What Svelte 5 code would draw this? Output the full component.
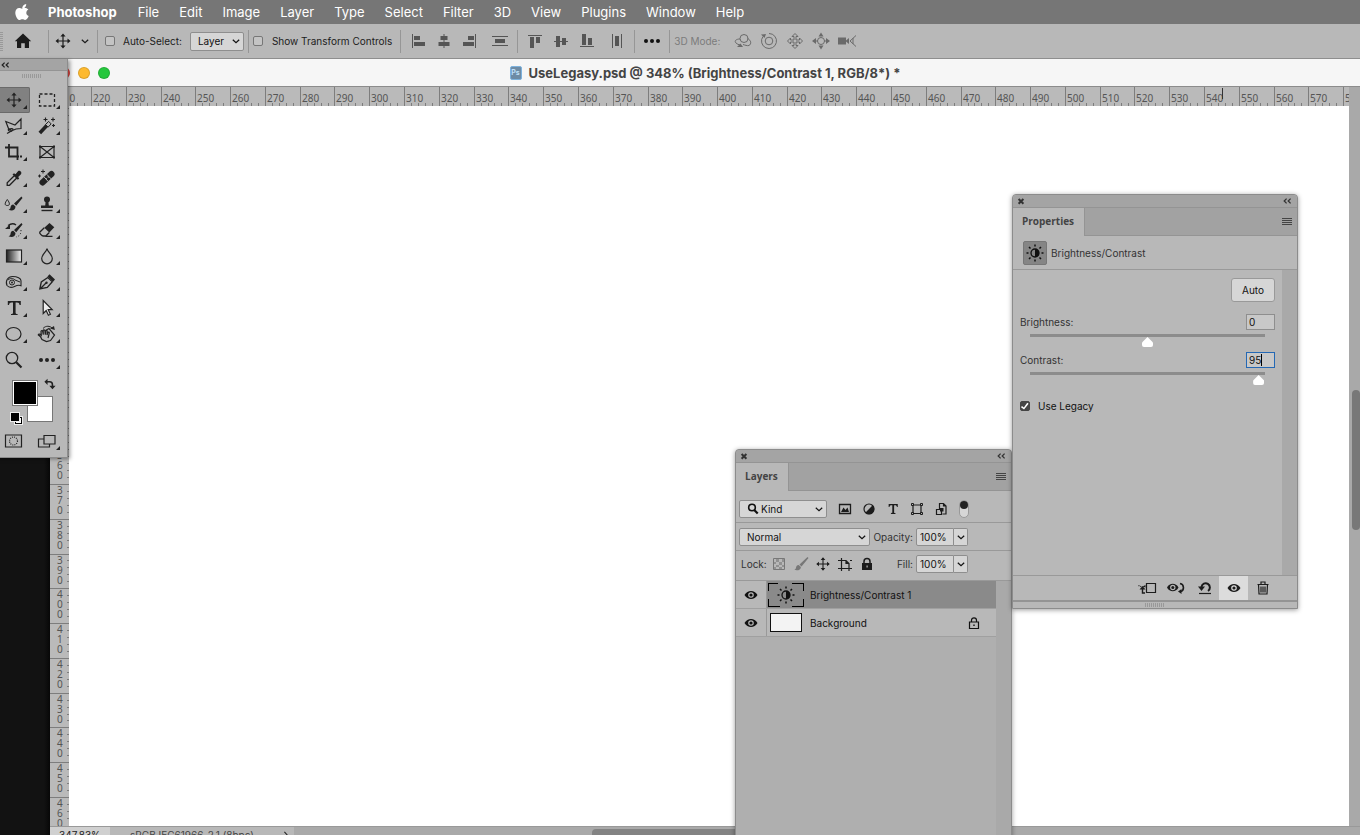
<script>
  const menus = ['File', 'Edit', 'Image', 'Layer', 'Type', 'Select', 'Filter', '3D', 'View', 'Plugins', 'Window', 'Help'];

  const line = 'fill="none" stroke="currentColor"';
  const icons = {
    apple: '<path fill="currentColor" d="M13.1 5.2c.8-1 1.2-2.2 1.1-3.3-1.1.1-2.2.7-2.9 1.6-.7.8-1.200 2-1 3 1 .1 2.100-.5 2.800-1.300zM14.300 10.900c0-1.700 1-2.700 2.100-3.300-.8-1.100-2-1.600-3.300-1.600-1.300 0-2.100.7-3 .7s-1.900-.7-3-.7C5.200 6 3.300 7.700 3.300 10.700c0 3.500 2.400 7.300 4.400 7.300 1 0 1.500-.7 2.700-.7s1.600.7 2.700.7c1.700 0 3.100-2.500 3.600-4-1.500-.6-2.400-1.700-2.400-3.100z"/>',
    home: '<path fill="currentColor" d="M10 2.500 1.800 10.300H4V17h4.200v-4.700h3.600V17H16v-6.700h2.200z"/>',
    move: `<path ${line} stroke-width="1.200" d="M10 4v12M4 10h12"/><path fill="currentColor" d="m10 2.500 2.600 3H7.400zm0 15-2.600-3h5.200zM2.500 10l3-2.600v5.200zm15 0-3 2.600V7.400z"/>`,
    marquee: `<path ${line} stroke-width="1.300" stroke-dasharray="3 2" d="M2.500 4h15v12h-15z"/>`,
    lasso: `<path ${line} stroke-width="1.200" d="m4.500 12.500-2.700-7L11 9l6-6v9.500l-5 .500-6 2.500M4 14.500c2-2.500 5-2.200 5-.8s-3.500 2-4.500.6 2-3 3 1.500M6.500 15.500 3 17.500"/>`,
    wand: `<path ${line} stroke-width="3.600" d="m2.800 17 7-7.500"/><path ${line} stroke-width="1" d="m8.500 8.500 2.600 2.700 3-3.300-2.400-2.500z"/><path ${line} stroke-width="1.100" d="M8.500 1.500v4M6.500 3.500h4M16 1.500v4M14 3.500h4M16.500 8v3M15 9.500h3"/>`,
    crop: `<path ${line} stroke-width="1.800" d="M1 5.500h12.500v8M5 2v12.500h10M16 14.500h2"/><path ${line} stroke-width="1.800" d="M13.500 15v3"/>`,
    frame: `<path ${line} stroke-width="1.200" d="M3 4.500h14v11H3zM3 4.500l14 11M17 4.500l-14 11"/><path fill="currentColor" d="M2 3.500h2v2H2zM16 3.500h2v2h-2zM2 14.500h2v2H2zM16 14.500h2v2h-2z"/>`,
    dropper: `<path ${line} stroke-width="1.300" d="m10.500 7.500-7.300 7.300v2.500h2.300l7.500-7.500z"/><path fill="currentColor" d="m8.500 6.500 1.500-1.300 1.500 1 2.500-3c1.500-1.400 4.500 1 3 3l-2.800 2.700 1 1.500-1.400 1.400z"/>`,
    heal: `<path ${line} stroke-width="6" stroke-linecap="round" d="m5.500 14.500 9-8.500"/><path fill="none" stroke="#b8b8b8" stroke-width="1" d="m7 8.800 4.200 4.700M9.800 6.300l4.200 4.500"/><g fill="#b8b8b8"><circle cx="9.200" cy="10.600" r=".7"/><circle cx="11.200" cy="9" r=".7"/></g><path ${line} stroke-width="1" d="M6 1.500v4M4 3.500h4M2.500 6.500v3M1 8h3"/>`,
    brush: `<path fill="currentColor" d="M17.500 2.500 10 9.500l2.200 2.200L18.500 4zM9.300 10.400c-2 .1-2.600 1.500-2.800 3.100-.2 1.500-1 2-2 2.300 3.300 1.700 7 .6 7-3.200z"/><path ${line} stroke-width="1" d="M3.300 5.500c2.600 3.500 3 6 0 6s-2.600-2.500 0-6z"/>`,
    stamp: `<circle cx="10" cy="5.500" r="3" fill="currentColor"/><path fill="currentColor" d="M8.700 7h2.600l.5 4.500H16V14H4v-2.500h4.200z"/><path ${line} stroke-width="1.400" d="M4.500 16.500h11"/>`,
    history: `<path fill="currentColor" d="M17.500 3 10 10l2.200 2.200L18.500 4.500zM9.300 10.800c-2 .1-2.600 1.500-2.800 3.100-.2 1.500-1 2-2 2.300 3.300 1.700 7 .6 7-3.200zM1 9l5-4.500V9z"/><path ${line} stroke-width="1.400" d="M4 5.500c3-2 6-2 8-.5"/><path ${line} stroke-width="1" stroke-dasharray="1 2" d="M17 10c0 4-1 6-5 7"/>`,
    eraser: `<path fill="currentColor" d="m12.500 3 4.800 4.300-5 5.200-5-4.700z"/><path ${line} stroke-width="1.300" d="m7.300 7.800-4.600 4.500c-.5.600 2 3.700 3.500 3.700h2.600l3.500-3.500M8.500 16.300h7"/>`,
    gradient: '<defs><linearGradient id="gradTool"><stop offset="0" stop-color="#222"/><stop offset="1" stop-color="#f4f4f4"/></linearGradient></defs><rect x="2.500" y="4" width="15" height="12" fill="url(#gradTool)" stroke="#222" stroke-width="1.200"/>',
    drop: `<path ${line} stroke-width="1.200" d="M10 2.500c.5 3.500 5.300 6 5.300 10a5 5 0 0 1-10.600 0c0-4 4.800-6.500 5.300-10z"/>`,
    sponge: `<path ${line} stroke-width="1.100" d="M3 13.500C1 9 4 4.500 8.500 4.500c5 0 8.500 2 8.500 4.200v5c-2.500-1.200-4.500-.2-6.500.8-2.500 1.200-5.500 1.300-7.500-1z"/><circle cx="8" cy="10.500" r="2.500" ${line}/><circle cx="8" cy="10.500" r="1" fill="currentColor"/><path ${line} d="M4 8c2-2 5-2 7 0l5 2"/>`,
    pen: `<path ${line} stroke-width="1.300" d="m2.800 17 1.500-7 6.500-4.500 4.500 4.200-5 5.800zM3 17l6-6"/><circle cx="9.500" cy="10.800" r="1.200" fill="currentColor"/><path fill="currentColor" d="m10.500 4.500 2-2.200 5.500 5.200-2 2.200z"/>`,
    type: '<path fill="currentColor" d="M3.800 3h13v4h-1.200c-.2-1.700-.9-2.500-2.700-2.500h-1.300v10.300c0 1 .5 1.200 2 1.300v1H7v-1c1.500-.1 2-.3 2-1.300V4.500H7.700C5.900 4.500 5.200 5.300 5 7H3.800z"/>',
    arrow: '<path fill="#eee" stroke="currentColor" stroke-width="1.200" d="M6.200 2.500v13l3-3 2.200 4.800 2-1-2.200-4.600h4z"/>',
    ellipse: `<ellipse cx="9.500" cy="10" rx="7.500" ry="6.500" ${line} stroke-width="1.200"/>`,
    hand: `<path ${line} stroke-width="1.200" d="m2.500 11 2.500 4.500 4.500 2 4-1 4-5.500-5.500-6.500-3.500 2M4.500 13.500 1.300 11c0-1.300 1.700-1.200 3 0L4 7.500c0-1.200 1.500-1 1.700 0l.6 3.200-.1-4c0-1.200 1.600-1 1.700 0l.4 4 .3-3.600c.2-1.100 1.500-1 1.600 0l-.2 4 .9-2.500c.5-.9 1.600-.5 1.400.5L11 14"/><path ${line} d="M6 4.500c3-3.300 7-2.500 9-.5"/><path fill="currentColor" d="m13 4.500 4-2.500.8 4z"/>`,
    zoom: `<circle cx="8" cy="8" r="5.700" ${line} stroke-width="1.300"/><path ${line} stroke-width="2.200" d="m12.200 12.200 5.300 5.300"/>`,
    dots: '<g fill="currentColor"><circle cx="4" cy="10" r="2"/><circle cx="10" cy="10" r="2"/><circle cx="16" cy="10" r="2"/></g>',
    swap: `<path ${line} stroke-width="2.200" d="M5 5.500h4.500c2.500 0 4 1.500 4 4v2"/><path fill="currentColor" d="M6.500 1v9L2 5.500zM9 11h9l-4.500 5z"/>`,
    mask: `<path ${line} stroke-width="1.200" d="M1.500 4h16v12h-16z"/><circle cx="9.500" cy="10" r="4" ${line} stroke-width="1.200" stroke-dasharray="1 1.100"/>`,
    screen: `<path ${line} stroke-width="1.200" d="M7 8H1.500v8h11v-3M7 4.500h11V13H7z"/>`,
    chevron: `<path ${line} stroke-width="1.200" d="m6.800 8.800 3.200 3 3.200-3"/>`,
    collapse: `<path ${line} stroke-width="1.600" d="M9.500 7 6.500 10l3 3M14.500 7l-3 3 3 3"/>`,
    close: `<path ${line} stroke-width="2.500" d="m7 7.500 6 6M13 7.500l-6 6"/>`,
    menu: `<path ${line} stroke-width="1" d="M5 6.500h10M5 8.500h10M5 10.500h10M5 12.500h10"/>`,
    alignL: '<path fill="currentColor" d="M4 3h1v14H4zM6 5h6v4H6zM6 11h11v4H6z"/>',
    alignC: '<path fill="currentColor" d="M9.500 3h1v14h-1zM6.500 5h7v4h-7zM4.500 11h11v4h-11z"/>',
    alignR: '<path fill="currentColor" d="M15 3h1v14h-1zM8 5h6v4H8zM3 11h11v4H3z"/>',
    distV: '<path fill="currentColor" d="M2 5h16v1H2zM5 8h10v4H5zM2 14h16v1H2z"/>',
    alignT: '<path fill="currentColor" d="M3 4h14v1H3zM5 6h4v11H5zM11 6h4v6h-4z"/>',
    alignM: '<path fill="currentColor" d="M3 10h14v1H3zM5 5h4v11H5zM11 7h4v7h-4z"/>',
    alignB: '<path fill="currentColor" d="M3 15h14v1H3zM5 3h4v11H5zM11 7h4v7h-4z"/>',
    distH: '<path fill="currentColor" d="M5 3h1v14H5zM8 5h4v10H8zM14 3h1v14h-1z"/>',
    orbit: `<circle cx="11" cy="7.500" r="4" ${line}/><path ${line} d="M7 8c-4 0-6 2-4 4 1 1 2.500 1.700 4 2M14.500 7.500c4 2 4 5.500 1.500 7-2 .5-4-.5-6-1"/><path fill="currentColor" d="m4 16 3.500-3.500L10 16z"/>`,
    roll: `<circle cx="10" cy="10" r="3.800" ${line}/><path ${line} d="M4 5.500a7.500 7.500 0 1 0 6-3"/><path fill="currentColor" d="M2 3.500 7 3 5.500 7z"/>`,
    pan3d: `<path ${line} d="m10 2.500 3 3h-2V9h3.500V7l3 3-3 3v-2H11v3.500h2l-3 3-3-3h2V11H5.500v2l-3-3 3-3v2H9V5.500H7z"/>`,
    slide: `<circle cx="10" cy="10" r="3.500" ${line}/><path fill="currentColor" d="m10 1.500 2.500 4h-5zM10 18.500l-2.500-4h5zM1 10l4-3v6zM19 10l-4-3v6z"/><path ${line} d="M4 10h3M13 10h3"/>`,
    camera: `<path fill="currentColor" d="M1 6.500h8v7H1zM9 9.500l3-2.500v6l-3-2.500z"/><path ${line} d="m19 4.500-6 5.500 6 5.500M16 7v6"/>`,
    image: `<path ${line} stroke-width="1.300" d="M4.500 5.500h11v9h-11z"/><path fill="currentColor" d="m6 13 2.500-4.500 2 2.500 2-2.500L14 13z"/>`,
    adjust: `<circle cx="10" cy="10" r="5" ${line} stroke-width="1.200"/><path fill="currentColor" d="M13.700 6.300a5.200 5.200 0 0 1-7.400 7.400z"/>`,
    shape: `<path ${line} stroke-width="1.200" d="M6 6h8v8.500H6z"/><g fill="#b8b8b8" stroke="currentColor"><path d="M4.500 4.500h2v2h-2zM13.500 4.500h2v2h-2zM4.500 13.500h2v2h-2zM13.500 13.500h2v2h-2z"/></g>`,
    smart: `<path ${line} stroke-width="1.200" d="M8.500 10V4.500h4l2.500 2.500v8h-3.500M12.500 4.500V7H15M5.500 10.500h5v5h-5z"/><path fill="currentColor" d="M9 9h3.500v3.500H9z"/>`,
    checker: `<path ${line} d="M4.500 4.500h11v11h-11z"/><path fill="currentColor" opacity=".6" d="M7 5h3v3H7zM13 5h2v3h-2zM5 8h2v2H5zM10 8h3v3h-3zM7 11h3v2H7zM13 11h2v2h-2zM5 13h2v2H5zM10 13h3v2h-3z"/>`,
    paint: '<path fill="currentColor" d="M16.500 3 8.500 10.500l2 2 7-8.500zM7.700 11c-2 0-2.500 1.500-2.700 2.800-.1 1-.9 1.700-1.700 2 3 1.200 6.600.2 6.600-2.900z"/>',
    artboard: `<path ${line} stroke-width="1.200" d="M6.500 4v13M3 6.500h8l3 3v7.500M3 14.500h14M11 6.500v3h3"/><path ${line} stroke-width="1.200" d="M15 6.500h2"/>`,
    lock: '<path fill="currentColor" d="M5 9h10v7H5z"/><path fill="none" stroke="currentColor" stroke-width="1.500" d="M7 9V7.500a3 3 0 0 1 6 0V9"/><path fill="#b8b8b8" d="M9.500 11.500h1.200v2H9.500z"/>',
    lockLine: `<path ${line} stroke-width="1.200" d="M5.500 9h9v6.500h-9zM7.500 9V7.300a2.500 2.500 0 0 1 5 0V9"/><path fill="currentColor" d="M9.300 11.500h1.400V13H9.300z"/>`,
    eye: '<path fill="currentColor" fill-rule="evenodd" d="M3.500 10C6.500 4.600 13.500 4.600 16.500 10c-3 5.400-10 5.400-13 0zm6.500-2.800a2.800 2.800 0 1 0 0 5.600 2.800 2.800 0 0 0 0-5.600z"/><circle cx="10" cy="10" r="1.600" fill="currentColor"/>',
    sun: `<circle cx="10" cy="10" r="4" ${line} stroke-width="1.300"/><path fill="currentColor" d="M10 6a4 4 0 0 1 0 8z"/><path ${line} stroke-width="1.500" d="M10 1.500v2M10 16.500v2M1.500 10h2M16.500 10h2M4 4l1.500 1.500M14.500 14.500 16 16M4 16l1.500-1.500M14.500 5.500 16 4"/>`,
    search: `<circle cx="9" cy="8.500" r="3.300" ${line} stroke-width="1.600"/><path ${line} stroke-width="2.200" d="m11.200 11 3.500 3.500"/>`,
    clip: `<path ${line} stroke-width="1.200" d="M9.500 5.500h9v9h-9z"/><path ${line} stroke-width="1.200" stroke-dasharray="1 1" d="M1.500 7.500 5 9"/><path ${line} stroke-width="1.400" d="M8 15H5.500v-4"/><path fill="currentColor" d="m2.500 11.500 3-3.500 3 3.500zM5.500 8.500 8.500 7v2.500z"/>`,
    prev: `<path fill="currentColor" fill-rule="evenodd" d="M1 9.500C3.500 4.500 10 4.500 12.500 9.500 10 14.500 3.500 14.500 1 9.500zm5.800-2.700a2.700 2.700 0 1 0 0 5.400 2.700 2.700 0 0 0 0-5.400z"/><circle cx="6.800" cy="9.500" r="1.500" fill="currentColor"/><path ${line} stroke-width="1.600" d="M14 5.500c4.500 1 4.500 7 .5 8"/><path fill="currentColor" d="M12 13.500 15.500 11v5z"/>`,
    reset: `<path ${line} stroke-width="2" d="M6.500 9a4.200 4.200 0 1 1 6.500 4"/><path fill="currentColor" d="M3 8.500h7L6.500 13z"/><path ${line} stroke-width="1.200" d="M4 15.500h12"/>`,
    trash: `<path ${line} stroke-width="1.200" d="M4.500 6.500h11M5.500 6.500l.5 9.500h8l.5-9.500M8 6V4h4v2M8 8.500v6M10 8.500v6M12 8.500v6"/>`,
    next: `<path ${line} stroke-width="1.300" d="m8 6 3.500 4L8 14"/>`
  };

  const tools = [
    ['move', 'Move'], ['marquee', 'Marquee'], ['lasso', 'Lasso'], ['wand', 'Magic wand'],
    ['crop', 'Crop'], ['frame', 'Frame'], ['dropper', 'Eyedropper'], ['heal', 'Healing brush'],
    ['brush', 'Brush'], ['stamp', 'Clone stamp'], ['history', 'History brush'], ['eraser', 'Eraser'],
    ['gradient', 'Gradient'], ['drop', 'Blur'], ['sponge', 'Sponge'], ['pen', 'Pen'],
    ['type', 'Type'], ['arrow', 'Path selection'], ['ellipse', 'Ellipse'], ['hand', 'Rotate view'],
    ['zoom', 'Zoom'], ['dots', 'More tools']
  ];
  const single = ['frame', 'zoom'];

  let winWidth = $state(1360);
  let winHeight = $state(835);

  // Ruler geometry: screen pixels per document unit at the current zoom
  const scale = 3.4783;
  const range = (from, to, step) => Array.from({ length: Math.max(0, Math.floor((to - from) / step) + 1) }, (_, i) => from + i * step);
  const hx = (v) => Math.round((v - 220) * scale + 41);
  const vy = (v) => Math.round((v - 460) * scale + 691);
  const hEnd = $derived(220 + (winWidth - 102) / scale);
  const vEnd = $derived(460 + (winHeight - 809) / scale);
  const hMajor = $derived(range(210, hEnd, 10));
  const hMinor = $derived(range(212, hEnd, 2).filter((v) => v % 10));
  const vMajor = $derived(range(360, vEnd, 10));
  const vMinor = $derived(range(262, vEnd, 2).filter((v) => v % 10));

  let autoSelect = $state(false);
  let showTransform = $state(false);
  let legacy = $state(true);
  let brightness = $state(0);
  let contrast = $state(95);
  let activeTool = $state('move');
</script>

<svelte:window bind:innerWidth={winWidth} bind:innerHeight={winHeight} />

{#snippet icon(name, size = 20)}
  <svg class="icon" width={size} height={size} viewBox="0 0 20 20" aria-hidden="true">{@html icons[name]}</svg>
{/snippet}

<div class="desktop">
  <nav class="menubar">
    <button class="apple" aria-label="Apple menu">{@render icon('apple')}</button>
    <button class="app-name">Photoshop</button>
    {#each menus as m}<button>{m}</button>{/each}
  </nav>

  <div class="options">
    <span class="grip-v"></span>
    <button class="home" aria-label="Home">{@render icon('home')}</button>
    <span class="sep"></span>
    <button class="current" aria-label="Move tool">{@render icon('move')}{@render icon('chevron')}</button>
    <span class="sep"></span>
    <label class="check"><input type="checkbox" bind:checked={autoSelect} />Auto-Select:</label>
    <span class="select layer-select">
      <select aria-label="Auto-select target"><option>Layer</option><option>Group</option></select>
      {@render icon('chevron')}
    </span>
    <span class="sep near"></span>
    <label class="check second"><input type="checkbox" bind:checked={showTransform} />Show Transform Controls</label>
    <span class="sep"></span>
    <div class="group aligns">
      {#each ['alignL', 'alignC', 'alignR'] as n}<button aria-label={n}>{@render icon(n)}</button>{/each}
      <button class="dist" aria-label="Distribute vertically">{@render icon('distV')}</button>
    </div>
    <span class="sep"></span>
    <div class="group aligns">
      {#each ['alignT', 'alignM', 'alignB'] as n}<button aria-label={n}>{@render icon(n)}</button>{/each}
      <button class="dist" aria-label="Distribute horizontally">{@render icon('distH')}</button>
    </div>
    <span class="sep"></span>
    <button class="more" aria-label="More options">{@render icon('dots')}</button>
    <span class="sep"></span>
    <span class="mode-label">3D Mode:</span>
    <div class="group modes">
      {#each ['orbit', 'roll', 'pan3d', 'slide', 'camera'] as n}<button disabled aria-label={n}>{@render icon(n)}</button>{/each}
    </div>
  </div>

  <main class="workspace">
    <section class="document">
      <header class="titlebar">
        <div class="lights">
          <button class="red" aria-label="Close"></button>
          <button class="yellow" aria-label="Minimize"></button>
          <button class="green" aria-label="Zoom window"></button>
        </div>
        <h1><span class="file-icon">Ps</span>UseLegasy.psd @ 348% (Brightness/Contrast 1, RGB/8*) *</h1>
      </header>
      <div class="view">
        <svg class="ruler ruler-h" aria-hidden="true">
          {#each hMajor as v}
            <rect x={hx(v)} y="0" width="1" height="19" fill="#7d7d7d" />
            <text x={hx(v) + 2} y="15">{v}</text>
          {/each}
          {#each hMinor as v}<rect x={hx(v)} y="16" width="1" height="3" fill="#7d7d7d" />{/each}
          <rect x="1172" y="1" width="1" height="11" fill="#333" />
        </svg>
        <div class="scroll-v"><span></span></div>
        <svg class="ruler ruler-v" aria-hidden="true">
          {#each vMajor as v}
            <rect x="0" y={vy(v)} width="19" height="1" fill="#7d7d7d" />
            {#each String(v).split('') as d, i}
              <text x="7" y={vy(v) + 10 + i * 10}>{d}</text>
            {/each}
          {/each}
          {#each vMinor as v}<rect x="17" y={vy(v)} width="2" height="1" fill="#7d7d7d" />{/each}
        </svg>
        <div class="canvas"></div>
      </div>
      <footer class="status">
        <span class="percent">347.83%</span>
        <span class="profile">sRGB IEC61966-2.1 (8bpc)</span>
        <button aria-label="Status menu">{@render icon('next', 16)}</button>
        <div class="scroll-h"><span></span></div>
      </footer>
    </section>

    <aside class="toolbox">
      <div class="toolbox-head">{@render icon('collapse', 16)}</div>
      <div class="grip"></div>
      <div class="tools">
        {#each tools as [name, label]}
          <button class:active={activeTool === name} class:flyout={!single.includes(name)} aria-label={label} onclick={() => (activeTool = name)}>
            {@render icon(name)}
          </button>
        {/each}
      </div>
      <div class="colors">
        <button class="bg" aria-label="Background color"></button>
        <button class="fg" aria-label="Foreground color"></button>
        <button class="swap" aria-label="Swap colors">{@render icon('swap', 14)}</button>
        <button class="default" aria-label="Default colors"><i></i><b></b></button>
      </div>
      <div class="tools">
        <button aria-label="Quick mask">{@render icon('mask')}</button>
        <button class="flyout" aria-label="Screen mode">{@render icon('screen')}</button>
      </div>
    </aside>

    <section class="panel layers">
      <div class="panel-head"><button aria-label="Close">{@render icon('close', 16)}</button><button aria-label="Collapse">{@render icon('collapse', 16)}</button></div>
      <div class="tabs"><button class="tab">Layers</button><button class="panel-menu" aria-label="Panel menu">{@render icon('menu')}</button></div>
      <div class="row filter">
        <span class="select kind">
          {@render icon('search')}
          <select aria-label="Filter type"><option>Kind</option><option>Name</option></select>
          {@render icon('chevron')}
        </span>
        <div class="filter-icons">
          {#each ['image', 'adjust', 'type', 'shape', 'smart'] as n}<button aria-label={n}>{@render icon(n, n === 'type' ? 14 : 20)}</button>{/each}
        </div>
        <button class="toggle" aria-label="Toggle filter"><span></span></button>
      </div>
      <div class="row blend">
        <span class="select mode">
          <select aria-label="Blend mode"><option>Normal</option><option>Multiply</option></select>
          {@render icon('chevron')}
        </span>
        <label class="value">Opacity:<input type="text" value="100%" /></label>
        <button class="drop" aria-label="Opacity slider">{@render icon('chevron')}</button>
      </div>
      <div class="row locks">
        <span>Lock:</span>
        <div class="lock-icons">
          {#each ['checker', 'paint', 'move', 'artboard', 'lock'] as n, i}<button class:dim={i < 2} aria-label={n}>{@render icon(n, n === 'move' ? 18 : 20)}</button>{/each}
        </div>
        <label class="value">Fill:<input type="text" value="100%" /></label>
        <button class="drop" aria-label="Fill slider">{@render icon('chevron')}</button>
      </div>
      <div class="list">
        <div class="layer selected">
          <button class="vis" aria-label="Toggle visibility">{@render icon('eye')}</button>
          <div class="name"><span class="thumb adj">{@render icon('sun')}</span>Brightness/Contrast 1</div>
        </div>
        <div class="layer">
          <button class="vis" aria-label="Toggle visibility">{@render icon('eye')}</button>
          <div class="name"><span class="thumb plain"></span>Background<span class="locked">{@render icon('lockLine')}</span></div>
        </div>
      </div>
    </section>

    <section class="panel properties">
      <div class="panel-head"><button aria-label="Close">{@render icon('close', 16)}</button><button aria-label="Collapse">{@render icon('collapse', 16)}</button></div>
      <div class="tabs"><button class="tab">Properties</button><button class="panel-menu" aria-label="Panel menu">{@render icon('menu')}</button></div>
      <div class="kind-row"><span class="badge">{@render icon('sun')}</span>Brightness/Contrast</div>
      <div class="props-body">
        <div class="controls">
          <button class="auto">Auto</button>
          <div class="field">
            <label for="brightness">Brightness:</label>
            <span class="num"><input id="brightness" type="text" bind:value={brightness} /></span>
          </div>
          <input type="range" aria-label="Brightness" min="-100" max="100" bind:value={brightness} />
          <div class="field">
            <label for="contrast">Contrast:</label>
            <span class="num editing"><input id="contrast" type="text" bind:value={contrast} /></span>
          </div>
          <input type="range" aria-label="Contrast" min="-100" max="100" bind:value={contrast} />
          <label class="check legacy"><input type="checkbox" bind:checked={legacy} />Use Legacy</label>
        </div>
      </div>
      <div class="actions">
        {#each ['clip', 'prev', 'reset', 'eye', 'trash'] as n}<button class:on={n === 'eye'} aria-label={n}>{@render icon(n)}</button>{/each}
      </div>
      <div class="resize"><div class="grip"></div></div>
    </section>
  </main>
</div>

<style>
  :global(body) { background: #111; }
  .desktop, .desktop * { box-sizing: border-box; }
  .desktop {
    height: 100vh; display: flex; flex-direction: column; overflow: hidden;
    font: 10px/14px Inter, "Liberation Sans", sans-serif; color: #222;
  }
  button { border: 0; padding: 0; margin: 0; background: none; font: inherit; color: inherit; display: inline-flex; align-items: center; justify-content: center; }
  input { font: inherit; color: inherit; margin: 0; }
  .icon { display: block; flex: none; }

  .menubar { flex: none; height: 24px; display: flex; align-items: center; gap: 20px; padding-left: 12px; background: #767676; color: #fff; font-size: 13px; font-weight: 400; text-shadow: 0 1px 2px #5558; white-space: nowrap; }
  .menubar .apple { width: 20px; margin-right: -4px; }
  .menubar .app-name { font-weight: 700; margin-right: 1px; }

  .options { flex: none; height: 35px; display: flex; align-items: center; background: #b8b8b8; border-bottom: 1px solid #8e8e8e; white-space: nowrap; color: #1c1c1c; }
  .sep { flex: none; width: 1px; height: 23px; background: #969696; }
  .sep.near { margin-left: 4px; }
  .grip-v { width: 3px; height: 19px; background: repeating-linear-gradient(#999 0 1px, #b8b8b8 1px 2px); }
  .home { margin: 0 15px 0 10px; }
  .current { gap: 2px; padding: 0 2px 0 4px; }
  .check { display: flex; align-items: center; gap: 8px; padding: 0 8px 0 7px; }
  .check.second { padding: 0 8px 0 4px; gap: 9px; }
  input[type='checkbox'] { appearance: none; width: 10px; height: 10px; border: 1px solid #777; border-radius: 2px; background: #c4c4c4; display: grid; place-items: center; }
  input[type='checkbox']:checked { background: #444; border-color: #444; }
  input[type='checkbox']:checked::before { content: ''; width: 8px; height: 8px; background: #fff; clip-path: polygon(12% 50%, 0 65%, 38% 95%, 95% 22%, 78% 8%, 36% 68%); }
  .select { display: flex; align-items: center; position: relative; border: 1px solid #8e8e8e; border-radius: 2px; background: #d6d6d6; color: #111; }
  .select select { appearance: none; width: 100%; height: 100%; border: 0; background: none; font: inherit; color: inherit; padding: 0 18px 0 7px; }
  .select > :global(svg:last-child) { position: absolute; right: -3px; pointer-events: none; }
  .layer-select { width: 54px; height: 19px; }
  .group { display: flex; align-items: center; color: #555; }
  .aligns { gap: 6px; padding: 0 7px; }
  .aligns .dist { margin-left: 4px; }
  .more { padding: 0 7px; color: #111; }
  .mode-label { color: #7c7c7c; padding: 0 13px 0 4px; }
  .modes { gap: 6px; color: #6a6a6a; }

  .workspace { flex: 1; position: relative; min-height: 0; background: linear-gradient(90deg, #121212 44px, #070707 50px); }
  .document { position: absolute; inset: 0 0 -8px 50px; display: flex; flex-direction: column; }
  .titlebar { flex: none; height: 28px; display: grid; grid-template-columns: 1fr auto 1fr; align-items: center; background: #f6f6f6; border-bottom: 1px solid #8c8c8c; }
  .lights { display: flex; gap: 8px; padding-left: 8px; }
  .lights button { width: 12px; height: 12px; border-radius: 50%; border: 1px solid #0002; }
  .red { background: #fe4e48; } .yellow { background: #fdb92e; } .green { background: #25c73d; }
  h1 { margin: 0; font-size: 13px; font-weight: 700; color: #444; display: flex; align-items: center; gap: 7px; white-space: nowrap; }
  .file-icon { width: 12px; height: 14px; border-radius: 2px; background: #6d8ba5; border: 1px solid #7db2dd; color: #bfe0fa; font-size: 7px; line-height: 12px; text-align: center; }
  .view { flex: 1; min-height: 0; display: grid; grid-template: 19px minmax(0, 1fr) / 19px minmax(0, 1fr) 11px; }
  .ruler { display: block; background: #bababa; overflow: hidden; font: 10px "Noto Sans", sans-serif; }
  .ruler text { fill: #555; }
  .ruler-h { grid-column: 1 / 3; width: 100%; height: 100%; }
  .ruler-v { width: 100%; height: 100%; }
  .canvas { background: #fff; }
  .scroll-v { grid-area: 1 / 3 / 3 / 4; background: #a9a9a9; padding-left: 3px; display: grid; grid-template-rows: 41% 19% 1fr; }
  .scroll-v span { grid-row: 2; background: #787878; border-radius: 4px; }
  .status { flex: none; height: 17px; display: flex; align-items: center; background: #b8b8b8; border-top: 1px solid #999; white-space: nowrap; }
  .percent { align-self: stretch; display: flex; align-items: center; padding: 0 9px; min-width: 60px; background: #d0d0d0; }
  .profile { padding: 0 24px 0 20px; color: #444; }
  .scroll-h { flex: 1; align-self: stretch; background: #a9a9a9; padding-top: 2px; display: grid; grid-template-columns: 28% 28% 1fr; }
  .scroll-h span { grid-column: 2; background: #838383; border-radius: 4px; }

  .toolbox { position: absolute; left: -3px; top: 0; width: 71px; background: #b8b8b8; border-right: 1px solid #8c8c8c; border-bottom: 1px solid #8c8c8c; box-shadow: 2px 1px 4px #0006; padding-bottom: 3px; }
  .toolbox-head { height: 12px; display: flex; align-items: center; background: #a4a4a4; border-bottom: 1px solid #949494; }
  .grip { width: 20px; height: 4px; margin: 3px auto 0; background: repeating-linear-gradient(90deg, #999 0 1px, #b8b8b8 1px 2px); }
  .toolbox > .grip { margin: 3px 0 9px 25px; }
  .tools { display: grid; grid-template-columns: 33px 33px; grid-auto-rows: 26px; }
  .tools button { position: relative; border-radius: 2px; }
  .tools .active { background: #818181; box-shadow: inset 0 0 0 1px #6a6a6a; }
  .flyout::after { content: ''; position: absolute; right: 3px; bottom: 4px; width: 4px; height: 4px; background: #222; clip-path: polygon(100% 0, 100% 100%, 0 100%); }
  .colors { position: relative; height: 55px; }
  .colors button { position: absolute; }
  .fg { left: 15px; top: 7px; width: 26px; height: 26px; background: #000; border: 1px solid #777; box-shadow: inset 0 0 0 1px #fff; }
  .bg { left: 30px; top: 23px; width: 26px; height: 26px; background: #fff; border: 1px solid #777; }
  .swap { left: 46px; top: 5px; }
  .default { left: 14px; top: 40px; width: 11px; height: 11px; }
  .default i { position: absolute; right: 0; bottom: 0; width: 7px; height: 7px; background: #fff; border: 1px solid #000; outline: 1px solid #eee; }
  .default b { position: absolute; left: 0; top: 0; width: 8px; height: 8px; background: #000; outline: 1px solid #eee; }

  .panel { position: absolute; display: flex; flex-direction: column; background: #b8b8b8; border: 1px solid #8c8c8c; border-radius: 4px 4px 0 0; box-shadow: 0 1px 5px #0006; }
  .panel-head { flex: none; height: 13px; display: flex; justify-content: space-between; align-items: center; background: #a4a4a4; border-bottom: 1px solid #949494; border-radius: 4px 4px 0 0; color: #333; padding: 0 2px 0 0; }
  .tabs { flex: none; height: 28px; display: flex; justify-content: space-between; background: #a2a2a2; border-bottom: 1px solid #949494; }
  .tab { padding: 0 10px 2px 9px; background: #b8b8b8; border-right: 1px solid #949494; font: 700 10px/14px "Open Sans", sans-serif; color: #444; margin-bottom: -1px; }
  .panel-menu { color: #444; }
  .layers { left: 735px; top: 390px; width: 277px; bottom: -60px; background: #afafaf; }
  .row { flex: none; display: flex; align-items: center; background: #b8b8b8; border-bottom: 1px solid #999; padding-left: 3px; color: #333; }
  .filter { height: 32px; padding-top: 5px; }
  .blend { height: 28px; }
  .locks { height: 30px; padding: 0 0 3px 5px; }
  .kind { width: 88px; height: 18px; margin-right: 8px; }
  .kind :global(svg:first-child) { margin: 0 -9px 0 3px; }
  .filter-icons { display: flex; gap: 4px; color: #1c1c1c; }
  .filter-icons button { width: 20px; height: 20px; }
  .toggle { width: 10px; height: 18px; margin-left: 8px; border-radius: 5px; background: #d6d6d6; border: 1px solid #999; align-items: flex-start; }
  .toggle span { flex: none; width: 8px; height: 8px; border-radius: 50%; background: #222; }
  .mode { width: 131px; height: 18px; }
  .value { display: flex; align-items: center; margin-left: auto; gap: 3px; }
  .value input { width: 38px; height: 18px; border: 1px solid #8e8e8e; border-radius: 2px 0 0 2px; background: #d6d6d6; padding: 0 3px; color: #111; }
  .drop { width: 14px; height: 18px; border: 1px solid #8e8e8e; border-left: 0; border-radius: 0 2px 2px 0; background: #d6d6d6; margin-right: 43px; color: #111; }
  .lock-icons { display: flex; gap: 2px; margin-left: 2px; color: #1c1c1c; }
  .lock-icons button { width: 20px; }
  .lock-icons .dim { color: #777; }
  .list { flex: 1; border-right: 15px solid #a9a9a9; }
  .layer { display: flex; height: 28px; border-bottom: 1px solid #a0a0a0; background: #b8b8b8; color: #111; }
  .vis { width: 31px; border-right: 1px solid #999; }
  .name { flex: 1; display: flex; align-items: center; gap: 6px; }
  .selected .name { background: #8a8a8a; }
  .thumb { width: 36px; height: 24px; display: grid; place-items: center; margin-left: 1px; }
  .plain { width: 32px; height: 19px; margin: 0 2px 0 3px; background: #f3f3f3; border: 1px solid #111; }
  .adj { background:
    linear-gradient(#000 0 0) 0 0 / 10px 1px, linear-gradient(#000 0 0) 100% 0 / 12px 1px,
    linear-gradient(#000 0 0) 0 100% / 12px 1px, linear-gradient(#000 0 0) 100% 100% / 12px 1px,
    linear-gradient(#000 0 0) 0 0 / 1px 8px, linear-gradient(#000 0 0) 100% 0 / 1px 8px,
    linear-gradient(#000 0 0) 0 100% / 1px 8px, linear-gradient(#000 0 0) 100% 100% / 1px 8px;
    background-repeat: no-repeat; }
  .locked { margin-left: auto; padding-right: 12px; }

  .properties { left: 1012px; top: 135px; width: 286px; }
  .kind-row { height: 34px; display: flex; align-items: center; gap: 4px; padding-left: 10px; border-bottom: 1px solid #999; color: #333; }
  .badge { width: 24px; height: 24px; display: grid; place-items: center; background: #858585; border: 1px solid #777; border-radius: 2px; color: #111; }
  .props-body { height: 305px; border-right: 15px solid #a9a9a9; color: #333; }
  .controls { display: flex; flex-direction: column; padding: 8px 7px 0 7px; }
  .auto { align-self: flex-end; width: 44px; height: 24px; background: #d6d6d6; border: 1px solid #999; border-radius: 3px; color: #111; margin-bottom: 11px; }
  .field { display: flex; justify-content: space-between; align-items: center; height: 18px; }
  .num { position: relative; display: flex; }
  .num input { width: 29px; height: 16px; border: 1px solid #8e8e8e; background: #c8c8c8; padding: 0 2px; color: #111; }
  .editing input { border-color: #2468b4; outline: 0; }
  .editing::after { content: ''; position: absolute; left: 15px; top: 2px; width: 1px; height: 12px; background: #000; }
  input[type='range'] { appearance: none; height: 13px; margin: 3px 5px 4px 5px; background: linear-gradient(#8c8c8c 0 0) 5px 0 / calc(100% - 10px) 3px no-repeat; }
  input[type='range']::-webkit-slider-runnable-track { height: 13px; }
  input[type='range']::-webkit-slider-thumb { appearance: none; width: 11px; height: 10px; margin-top: 3px; background: #fff; border-radius: 2px; clip-path: polygon(50% 0, 100% 55%, 100% 100%, 0 100%, 0 55%); }
  .legacy { padding: 10px 0 0 0; color: #111; }
  .actions { height: 25px; display: flex; justify-content: flex-end; border-top: 1px solid #999; padding-right: 20px; color: #1c1c1c; }
  .actions button { width: 29px; }
  .actions .on { background: #dcdcdc; }
  .resize { height: 8px; border-top: 2px solid #949494; }
  .resize .grip { margin-top: 1px; }
</style>
